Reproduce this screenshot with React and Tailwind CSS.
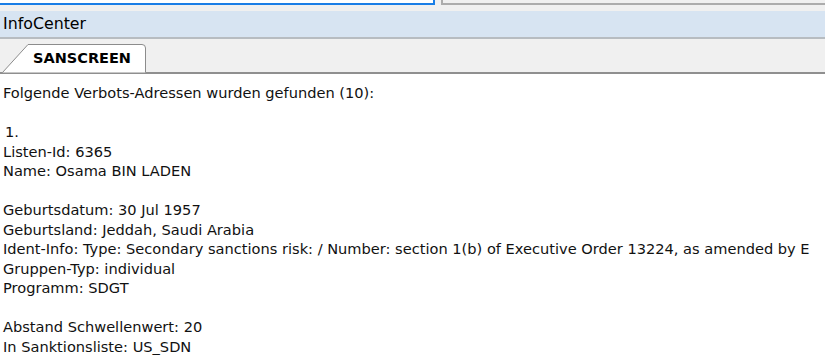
import React from 'react';

// Result lines shown in the InfoCenter pane
const lines = [
  { text: 'Folgende Verbots-Adressen wurden gefunden (10):' },
  { text: '' },
  { text: '1.', indent: true },
  { text: 'Listen-Id: 6365' },
  { text: 'Name: Osama BIN LADEN' },
  { text: '' },
  { text: 'Geburtsdatum: 30 Jul 1957' },
  { text: 'Geburtsland: Jeddah, Saudi Arabia' },
  { text: 'Ident-Info: Type: Secondary sanctions risk: / Number: section 1(b) of Executive Order 13224, as amended by E' },
  { text: 'Gruppen-Typ: individual' },
  { text: 'Programm: SDGT' },
  { text: '' },
  { text: 'Abstand Schwellenwert: 20' },
  { text: 'In Sanktionsliste: US_SDN' },
];

const Tab = ({ label }) => (
  <div className="relative h-[29px] w-[146px] ml-[2px]">
    <svg className="absolute inset-0" width="146" height="30" viewBox="0 0 146 30">
      <path d="M0.5 29.5 L26 1.5 L140 1.5 Q143.5 1.5 143.5 5 L143.5 29.5" fill="#ffffff" stroke="#8c8c8c" strokeWidth="1" />
    </svg>
    <span className="relative flex h-full items-center pl-[31px] pt-[2px] text-[14.5px] font-bold text-black">
      {label}
    </span>
  </div>
);

const App = () => {
  return (
    <div className="w-[825px] h-[361px] overflow-hidden bg-[#f0f0f0] flex flex-col" style={{ fontFamily: '"DejaVu Sans", Tahoma, sans-serif' }}>
      {/* Top input fields (cut off) */}
      <div className="flex h-[11px] shrink-0">
        <div className="w-[435px] h-[5px] border-b-2 border-r-2 border-[#1a7ee6] bg-white" />
        <div className="ml-[6px] flex-1 h-[5px] border-b-2 border-l-2 border-[#acacac] bg-[#f0f0f0]" />
      </div>

      {/* Pane header */}
      <div className="h-[28px] shrink-0 bg-[#d7e4f2] border-b-2 border-[#b7bcc1] flex items-center pl-[3px] text-[15.8px] text-black">
        InfoCenter
      </div>

      {/* Tab strip */}
      <div className="shrink-0 pt-[4px] flex items-end border-b-2 border-[#8f8f8f] relative">
        <Tab label="SANSCREEN" />
      </div>

      {/* Content */}
      <div className="flex-1 bg-white pt-[9px] pl-[3px] text-[14.6px] leading-[19.5px] text-[#111] whitespace-pre overflow-hidden">
        {lines.map((l, i) => (
          <div key={i} className={l.indent ? 'h-[19.5px] pl-[2px]' : 'h-[19.5px]'}>{l.text}</div>
        ))}
      </div>
    </div>
  );
};

export default App;
